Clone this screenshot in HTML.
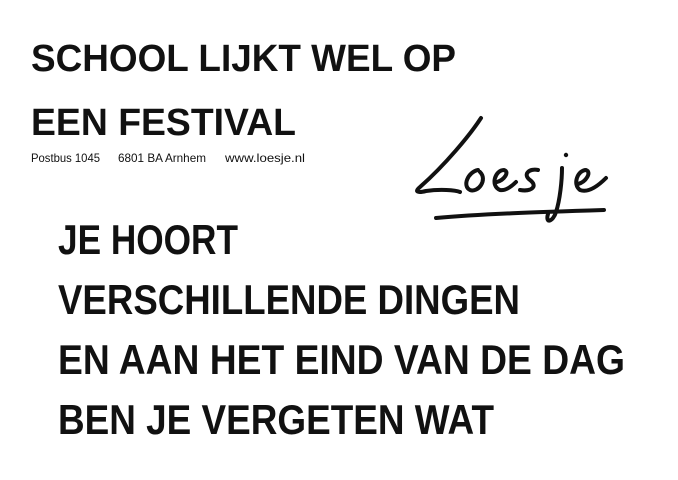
<!DOCTYPE html>
<html><head><style>body{margin:0;background:#fff}svg{display:block}</style></head><body>
<svg width="678" height="480" viewBox="0 0 678 480" xmlns="http://www.w3.org/2000/svg">
<rect width="678" height="480" fill="#fff"/>
<g font-family="Liberation Sans, sans-serif" font-weight="bold" fill="#111">
<text x="31" y="71" font-size="38" textLength="425" lengthAdjust="spacingAndGlyphs">SCHOOL LIJKT WEL OP</text>
<text x="31" y="135" font-size="38" textLength="265" lengthAdjust="spacingAndGlyphs">EEN FESTIVAL</text>
<g font-size="42">
<text x="58" y="254" textLength="180" lengthAdjust="spacingAndGlyphs">JE HOORT</text>
<text x="58" y="314" textLength="462" lengthAdjust="spacingAndGlyphs">VERSCHILLENDE DINGEN</text>
<text x="58" y="374" textLength="567" lengthAdjust="spacingAndGlyphs">EN AAN HET EIND VAN DE DAG</text>
<text x="58" y="434" textLength="436" lengthAdjust="spacingAndGlyphs">BEN JE VERGETEN WAT</text>
</g>
</g>
<g font-family="Liberation Sans, sans-serif" font-size="12" fill="#111">
<text x="31" y="162" textLength="69" lengthAdjust="spacingAndGlyphs">Postbus 1045</text>
<text x="118" y="162" textLength="88" lengthAdjust="spacingAndGlyphs">6801 BA Arnhem</text>
<text x="225" y="162" textLength="80" lengthAdjust="spacingAndGlyphs">www.loesje.nl</text>
</g>
<g fill="none" stroke="#111" stroke-width="4" stroke-linecap="round" stroke-linejoin="round">
<path d="M481 118 C470 135 445 165 420 187 C414 192 418 193 426 191 C440 189 455 190 460 192"/>
<path d="M478 170 C468 172 462 186 470 190 C478 193 488 180 480 172"/>
<path d="M497 182 C504 180 510 172 504 170 C495 170 490 186 500 190 C506 191 512 186 516 182"/>
<path d="M538 170 C530 168 522 174 530 180 C538 186 532 192 520 190"/>
<path d="M562 168 C562 180 560 200 556 212 C553 222 545 224 548 214"/>
<path d="M578 184 C586 182 592 172 586 170 C578 170 572 184 580 190 C588 193 598 186 606 178"/>
<path d="M436 218 C480 214 540 212 604 210"/>
</g>
<circle cx="566" cy="155" r="2.2" fill="#111"/>
</svg>
</body></html>
